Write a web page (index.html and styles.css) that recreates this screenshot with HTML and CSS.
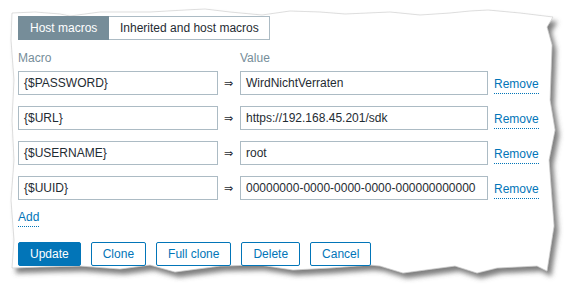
FILE: index.html
```html
<!DOCTYPE html>
<html>
<head>
<meta charset="utf-8">
<link rel="stylesheet" href="styles.css">
</head>
<body>
<div class="page">
  <svg class="paper" width="567" height="286" viewBox="0 0 567 286">
    <defs>
      <filter id="sh" x="-5%" y="-5%" width="115%" height="120%">
        <feDropShadow dx="4" dy="5" stdDeviation="2.8" flood-color="#555" flood-opacity="0.75"/>
      </filter>
    </defs>
    <polygon filter="url(#sh)" fill="#fff" stroke="#c8c8c8" stroke-width="0.6" points="12,13 35,12 60,14 70,16 100,12 150,12 185,10 205,9 230,12 262,15 290,11 320,12 345,14 390,12 420,15 450,13 470,11 488,10 520,13 553,17 547,27 552,45 550,100 555,130 549,160 552,200 554,226 547,271 537,266 497,268 477,273 455,266 440,268 403,273 380,266 370,265 330,268 293,270 260,265 220,266 175,272 150,265 120,269 80,266 40,267 12,268 14,240 11,200 14,160 12,120 14,80 11,40"/>
  </svg>
  <div class="content">
    <div class="tabs">
      <span class="tab tab-active">Host macros</span>
      <span class="tab">Inherited and host macros</span>
    </div>
    <div class="grid">
      <div class="hdr">Macro</div>
      <div></div>
      <div class="hdr">Value</div>
      <div></div>

      <div class="input macro">{$PASSWORD}</div>
      <div class="arrow">⇒</div>
      <div class="input value">WirdNichtVerraten</div>
      <div class="act"><span class="link">Remove</span></div>

      <div class="input macro">{$URL}</div>
      <div class="arrow">⇒</div>
      <div class="input value">https://192.168.45.201/sdk</div>
      <div class="act"><span class="link">Remove</span></div>

      <div class="input macro">{$USERNAME}</div>
      <div class="arrow">⇒</div>
      <div class="input value">root</div>
      <div class="act"><span class="link">Remove</span></div>

      <div class="input macro">{$UUID}</div>
      <div class="arrow">⇒</div>
      <div class="input value">00000000-0000-0000-0000-000000000000</div>
      <div class="act"><span class="link">Remove</span></div>
    </div>
    <div class="add"><span class="link">Add</span></div>
    <div class="buttons">
      <span class="btn btn-main">Update</span>
      <span class="btn">Clone</span>
      <span class="btn">Full clone</span>
      <span class="btn">Delete</span>
      <span class="btn">Cancel</span>
    </div>
  </div>
</div>
</body>
</html>
```

FILE: styles.css
```css
* { box-sizing: border-box; }
html, body { margin: 0; padding: 0; background: #fff; }
body {
  font-family: Arial, "Liberation Sans", sans-serif;
  font-size: 12px;
  color: #1f2c33;
}
.page {
  position: relative;
  width: 567px;
  height: 286px;
  overflow: hidden;
}
.paper {
  position: absolute;
  left: 0;
  top: 0;
}
.content {
  position: relative;
  padding: 16px 0 0 18px;
}
.tabs {
  display: flex;
  height: 24px;
}
.tab {
  display: flex;
  align-items: center;
  padding: 0 11px;
  border: 1px solid #acbbc4;
  border-left: none;
  background: #fff;
  white-space: nowrap;
}
.tab-active {
  background: #768d99;
  border-color: #768d99;
  color: #fff;
  padding: 0 12px;
  width: 91px;
}
.tab:last-child {
  width: 161px;
}
.grid {
  display: grid;
  grid-template-columns: 200px 22px 248px auto;
  row-gap: 11px;
  margin-top: 11px;
}
.hdr {
  color: #768d99;
  height: 14px;
  line-height: 14px;
  margin-bottom: -5px;
}
.input {
  height: 24px;
  border: 1px solid #acbbc4;
  padding: 0 5px;
  line-height: 22px;
  white-space: nowrap;
  overflow: hidden;
}
.arrow {
  display: flex;
  align-items: center;
  justify-content: center;
  padding-right: 1px;
  font-size: 11px;
  color: #1f2c33;
}
.act {
  display: flex;
  align-items: center;
  padding-left: 6px;
}
.link {
  color: #0275b8;
  border-bottom: 1px dotted #0275b8;
  line-height: 14px;
  padding-bottom: 2px;
}
.act .link { margin-top: 4px; }
.add {
  margin-top: 10px;
  height: 18px;
}
.buttons {
  display: flex;
  gap: 10px;
  margin-top: 14px;
}
.btn {
  height: 24px;
  display: flex;
  align-items: center;
  padding: 0 11px;
  border: 1px solid #0275b8;
  border-radius: 2px;
  color: #0275b8;
  background: #fff;
  white-space: nowrap;
}
.btn-main {
  background: #0275b8;
  color: #fff;
}
```
